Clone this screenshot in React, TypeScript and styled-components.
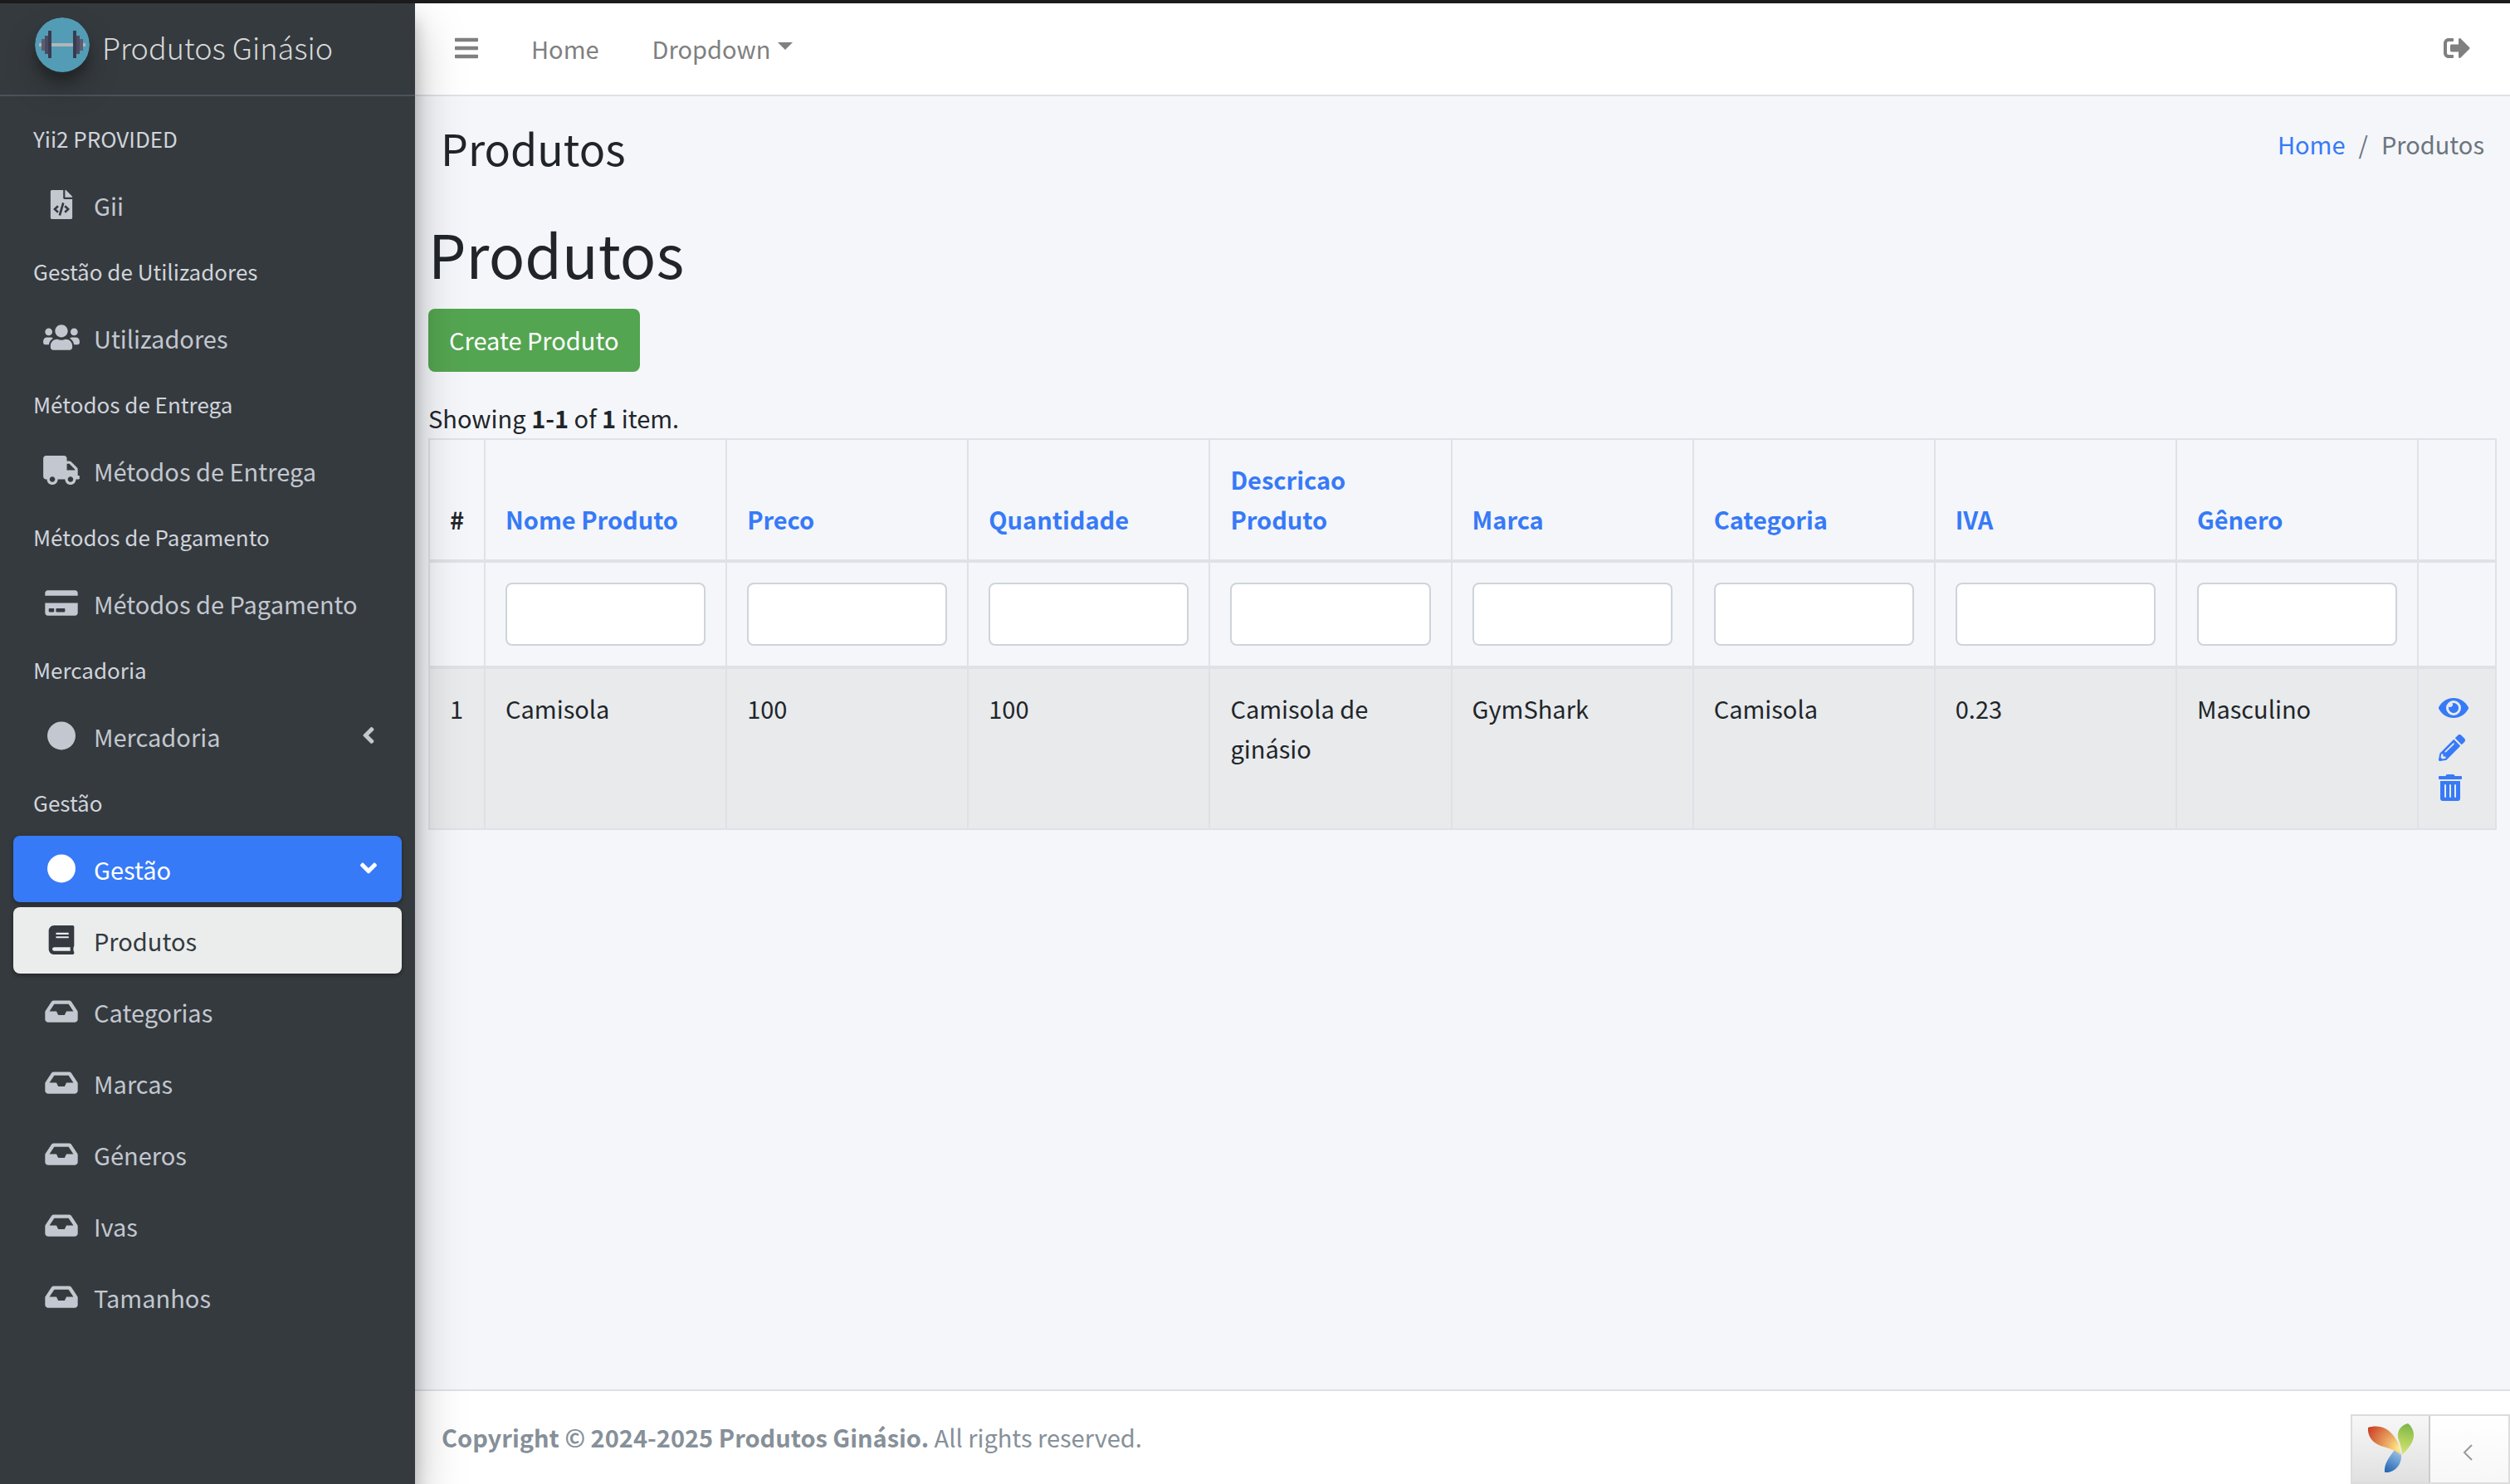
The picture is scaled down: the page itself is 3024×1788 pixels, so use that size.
import React from 'react';
import styled, { createGlobalStyle, css } from 'styled-components';
import {
  FaAngleLeft,
  FaAngleDown,
  FaBars,
  FaBook,
  FaCircle,
  FaCreditCard,
  FaFileCode,
  FaInbox,
  FaSignOutAlt,
  FaTruck,
  FaUsers,
} from 'react-icons/fa';
import type { IconType } from 'react-icons';

const GlobalStyle = createGlobalStyle`
  *, *::before, *::after { box-sizing: border-box; }
  body {
    margin: 0;
    background: #f4f6fa;
    color: #212529;
    font-family: "Noto Sans CJK SC", "Noto Sans", sans-serif;
    font-size: 29px;
    line-height: 48px;
  }
  a { color: #377af7; text-decoration: none; }
  button, input { font: inherit; }
`;

const Page = styled.div`
  display: flex;
  min-height: 100vh;
  border-top: 4px solid #1c1c1c;
`;

const Sidebar = styled.aside`
  position: relative;
  z-index: 2;
  flex: 0 0 500px;
  background: #353a3e;
  box-shadow: 0 28px 56px rgba(0, 0, 0, 0.25), 0 20px 20px rgba(0, 0, 0, 0.22);
`;

const Brand = styled.a`
  display: flex;
  align-items: center;
  gap: 15px;
  height: 112px;
  padding: 0 16px 10px 42px;
  border-bottom: 2px solid #4b525b;
  color: #d6d8d9;
  font-size: 36px;
  font-weight: 300;
  white-space: nowrap;
`;

const BrandName = styled.span`
  padding-top: 4px;
`;

const BrandLogo = styled.svg`
  flex: none;
  width: 66px;
  height: 66px;
  border-radius: 50%;
  box-shadow: 0 20px 40px rgba(0, 0, 0, 0.19), 0 12px 12px rgba(0, 0, 0, 0.23);
`;

const Menu = styled.ul`
  display: flex;
  flex-direction: column;
  margin: 0;
  padding: 17px 16px 0;
  list-style: none;
`;

const MenuHeader = styled.li`
  height: 74px;
  padding: 14px 24px 0;
  color: #d0d4db;
  font-size: 26px;
  line-height: 40px;
`;

const MenuItem = styled.li`
  padding-bottom: 6px;
`;

type Tone = 'plain' | 'primary' | 'light';

const tones = {
  plain: css`
    color: #c2c7d0;
  `,
  primary: css`
    background: #377af7;
    color: #fff;
    box-shadow: 0 2px 6px rgba(0, 0, 0, 0.12), 0 2px 4px rgba(0, 0, 0, 0.24);
  `,
  light: css`
    background: #ebedec;
    color: #343a40;
    box-shadow: 0 2px 6px rgba(0, 0, 0, 0.12), 0 2px 4px rgba(0, 0, 0, 0.24);
  `,
};

const MenuLink = styled.a<{ $tone: Tone }>`
  display: flex;
  align-items: center;
  height: 80px;
  padding: 0 30px 0 32px;
  border-radius: 8px;
  ${(p) => tones[p.$tone]}
`;

const MenuIcon = styled.span`
  display: flex;
  justify-content: center;
  width: 52px;
  margin-right: 13px;
  padding-bottom: 2px;

  svg {
    flex: none;
    width: 44px;
    height: 35px;
  }
`;

const MenuText = styled.span`
  flex: 1;
  white-space: nowrap;
`;

const MenuArrow = styled.span`
  display: flex;
  padding-bottom: 3px;

  svg {
    width: 20px;
    height: 32px;
  }
`;

const Main = styled.div`
  display: flex;
  flex: 1;
  flex-direction: column;
  min-width: 0;
`;

const TopBar = styled.header`
  display: flex;
  align-items: center;
  justify-content: space-between;
  height: 112px;
  padding: 0 48px 3px;
  border-bottom: 2px solid #dee2e6;
  background: #fff;
  color: #808080;
`;

const TopNav = styled.nav`
  display: flex;
  align-items: center;
  gap: 64px;
`;

const IconButton = styled.button<{ $width: number }>`
  display: flex;
  padding: 0;
  border: 0;
  background: none;
  color: inherit;

  svg {
    width: ${(p) => p.$width}px;
    height: 32px;
  }
`;

const TopLink = styled.a`
  color: inherit;
`;

const DropdownButton = styled.button`
  display: flex;
  align-items: center;
  gap: 9px;
  padding: 0;
  border: 0;
  background: none;
  color: inherit;

  &::after {
    content: '';
    margin-bottom: 4px;
    border-top: 9px solid;
    border-right: 9px solid transparent;
    border-left: 9px solid transparent;
  }
`;

const ContentHeader = styled.div`
  display: flex;
  align-items: flex-start;
  justify-content: space-between;
  padding: 27px 31px 0;
`;

const PageTitle = styled.h1`
  margin: 0;
  font-size: 52px;
  font-weight: 400;
  line-height: 70px;
`;

const Breadcrumb = styled.ol`
  display: flex;
  gap: 16px;
  margin: 0;
  padding: 6px 0 0;
  color: #6c757d;
  list-style: none;
`;

const Content = styled.main`
  flex: 1;
  padding: 44px 16px 0;
`;

const Heading = styled.h2`
  margin: 0 0 19px;
  font-size: 72px;
  font-weight: 400;
  line-height: 96px;
`;

const CreateLink = styled.a`
  display: inline-block;
  padding: 12px 25px 14px;
  border-radius: 8px;
  background: #54a551;
  color: #fff;
  line-height: 50px;
`;

const Summary = styled.p`
  margin: 31px 0 1px;
  line-height: 48px;
`;

const Grid = styled.table`
  width: 100%;
  border-collapse: collapse;
  table-layout: fixed;

  th, td {
    padding: 24px;
    border: 2px solid #dee2e6;
    text-align: left;
    vertical-align: top;
  }
  thead th, thead td { border-bottom-width: 4px; }
  th { vertical-align: bottom; font-weight: 700; }
  th, tbody td { padding: 23px 24px 25px; }
  tbody tr { background: #e8eaec; }
`;

const NumberCol = styled.col`
  width: 67px;
`;

const ActionCol = styled.col`
  width: 94px;
`;

const FilterInput = styled.input`
  display: block;
  width: 100%;
  height: 76px;
  padding: 12px 24px;
  border: 2px solid #ced4da;
  border-radius: 8px;
  background: #fff;
`;

const ActionLink = styled.a`
  display: flex;
  align-items: center;
  width: 36px;
  height: 48px;
`;

const ActionIcon = styled.svg`
  height: 32px;
  fill: currentColor;
`;

const Footer = styled.footer`
  height: 114px;
  padding: 31px 32px;
  border-top: 2px solid #dee2e6;
  background: #fff;
  color: #869099;
`;

const DebugBar = styled.div`
  position: fixed;
  right: 0;
  bottom: 0;
  z-index: 3;
  display: flex;
  width: 192px;
  height: 84px;
  border: 2px solid #dcdcdc;
  background: linear-gradient(#fff, #f7f7f7);
`;

const DebugLogo = styled.a`
  display: flex;
  align-items: center;
  justify-content: center;
  width: 94px;
  border-right: 2px solid #ccc;
  background: linear-gradient(#f7f7f7, #e0e0e0);
`;

const DebugToggle = styled.button`
  display: flex;
  flex: 1;
  align-items: center;
  justify-content: center;
  padding: 8px 4px 0 0;
  border: 0;
  background: none;
`;

const EYE =
  'M573 241C518 136 411 64 288 64S58 136 3 241a32 32 0 000 30c55 105 162 177 285 177s230-72 285-177a32 32 0 000-30zM288 400a144 144 0 11144-144 144 144 0 01-144 144zm0-240a95 95 0 00-25 4 48 48 0 01-67 67 96 96 0 1092-71z';
const PENCIL =
  'M498 142l-46 46c-5 5-13 5-17 0L324 77c-5-5-5-12 0-17l46-46c19-19 49-19 68 0l60 60c19 19 19 49 0 68zm-214-42L22 362 0 484c-3 16 12 30 28 28l122-22 262-262c5-5 5-13 0-17L301 100c-4-5-12-5-17 0zM124 340c-5-6-5-14 0-20l154-154c6-5 14-5 20 0s5 14 0 20L144 340c-6 5-14 5-20 0zm-36 84h48v36l-64 12-32-31 12-65h36v48z';
const TRASH =
  'M32 464a48 48 0 0048 48h288a48 48 0 0048-48V128H32zm272-256a16 16 0 0132 0v224a16 16 0 01-32 0zm-96 0a16 16 0 0132 0v224a16 16 0 01-32 0zm-96 0a16 16 0 0132 0v224a16 16 0 01-32 0zM432 32H312l-9-19a24 24 0 00-22-13H167a24 24 0 00-22 13l-9 19H16A16 16 0 000 48v32a16 16 0 0016 16h416a16 16 0 0016-16V48a16 16 0 00-16-16z';

type Entry =
  | { header: string }
  | { label: string; icon: IconType; tone?: Tone; arrow?: IconType };

const menu: Entry[] = [
  { header: 'Yii2 PROVIDED' },
  { label: 'Gii', icon: FaFileCode },
  { header: 'Gestão de Utilizadores' },
  { label: 'Utilizadores', icon: FaUsers },
  { header: 'Métodos de Entrega' },
  { label: 'Métodos de Entrega', icon: FaTruck },
  { header: 'Métodos de Pagamento' },
  { label: 'Métodos de Pagamento', icon: FaCreditCard },
  { header: 'Mercadoria' },
  { label: 'Mercadoria', icon: FaCircle, arrow: FaAngleLeft },
  { header: 'Gestão' },
  { label: 'Gestão', icon: FaCircle, tone: 'primary', arrow: FaAngleDown },
  { label: 'Produtos', icon: FaBook, tone: 'light' },
  { label: 'Categorias', icon: FaInbox },
  { label: 'Marcas', icon: FaInbox },
  { label: 'Géneros', icon: FaInbox },
  { label: 'Ivas', icon: FaInbox },
  { label: 'Tamanhos', icon: FaInbox },
];

const columns = ['Nome Produto', 'Preco', 'Quantidade', 'Descricao Produto', 'Marca', 'Categoria', 'IVA', 'Gênero'];
const row = ['Camisola', '100', '100', 'Camisola de ginásio', 'GymShark', 'Camisola', '0.23', 'Masculino'];

function Dumbbell() {
  return (
    <BrandLogo viewBox="0 0 66 66" aria-hidden="true">
      <circle cx="33" cy="33" r="33" fill="#529cb5" />
      <path d="M5 31h56v4H5z" fill="#b3b5b7" />
      <path d="M8 26h5v14H8zM53 26h5v14h-5z" fill="#5c5d70" />
      <path d="M12 22h5v22h-5zM49 22h5v22h-5z" fill="#4a4b60" />
      <path d="M16 16h4v33h-4zM46 16h4v33h-4z" fill="#3a3b4e" />
    </BrandLogo>
  );
}

function YiiLogo() {
  return (
    <svg width="58" height="62" viewBox="0 0 58 62" aria-hidden="true">
      <defs>
        <radialGradient id="leafOrange" cx="40" cy="30" r="44" gradientUnits="userSpaceOnUse">
          <stop offset="0" stopColor="#fff08a" />
          <stop offset="0.35" stopColor="#ecae66" />
          <stop offset="1" stopColor="#cb4028" />
        </radialGradient>
        <linearGradient id="leafGreen" x1="42" y1="36" x2="50" y2="2" gradientUnits="userSpaceOnUse">
          <stop offset="0" stopColor="#d6e27c" />
          <stop offset="0.5" stopColor="#aed059" />
          <stop offset="1" stopColor="#7fb74c" />
        </linearGradient>
        <linearGradient id="leafBlue" x1="38" y1="34" x2="24" y2="56" gradientUnits="userSpaceOnUse">
          <stop offset="0" stopColor="#98bfe8" />
          <stop offset="1" stopColor="#2a6bb3" />
        </linearGradient>
      </defs>
      <path d="M34 32Q43 34 42 40C42 50 34 60 22 59C21 48 28 40 34 32Z" fill="url(#leafBlue)" />
      <path d="M2 5C14 1 25 5 32 14C38 21 41 29 41 38C36 32 27 30 17 27C7 23 1 15 2 5Z" fill="url(#leafOrange)" />
      <path d="M50 0C42 2 37 8 38 17C40 24 43 30 43 38C50 31 57 23 57 14C57 8 54 3 50 0Z" fill="url(#leafGreen)" />
    </svg>
  );
}

export default function App() {
  return (
    <>
      <GlobalStyle />
      <Page>
        <Sidebar>
          <Brand href="#">
            <Dumbbell />
            <BrandName>Produtos Ginásio</BrandName>
          </Brand>
          <nav>
            <Menu>
              {menu.map((entry) => {
                if ('header' in entry) return <MenuHeader key={`h-${entry.header}`}>{entry.header}</MenuHeader>;
                const Icon = entry.icon;
                const Arrow = entry.arrow;
                return (
                  <MenuItem key={entry.label}>
                    <MenuLink href="#" $tone={entry.tone ?? 'plain'}>
                      <MenuIcon>
                        <Icon />
                      </MenuIcon>
                      <MenuText>{entry.label}</MenuText>
                      {Arrow && (
                        <MenuArrow>
                          <Arrow />
                        </MenuArrow>
                      )}
                    </MenuLink>
                  </MenuItem>
                );
              })}
            </Menu>
          </nav>
        </Sidebar>
        <Main>
          <TopBar>
            <TopNav>
              <IconButton $width={28} aria-label="Menu">
                <FaBars />
              </IconButton>
              <TopLink href="#">Home</TopLink>
              <DropdownButton>Dropdown</DropdownButton>
            </TopNav>
            <IconButton $width={32} aria-label="Logout">
              <FaSignOutAlt />
            </IconButton>
          </TopBar>
          <ContentHeader>
            <PageTitle>Produtos</PageTitle>
            <Breadcrumb>
              <li>
                <a href="#">Home</a>
              </li>
              <li>/</li>
              <li>Produtos</li>
            </Breadcrumb>
          </ContentHeader>
          <Content>
            <Heading>Produtos</Heading>
            <CreateLink href="#">Create Produto</CreateLink>
            <Summary>
              Showing <b>1-1</b> of <b>1</b> item.
            </Summary>
            <Grid>
              <colgroup>
                <NumberCol />
                {columns.map((name) => (
                  <col key={name} />
                ))}
                <ActionCol />
              </colgroup>
              <thead>
                <tr>
                  <th>#</th>
                  {columns.map((name) => (
                    <th key={name}>
                      <a href="#">{name}</a>
                    </th>
                  ))}
                  <th />
                </tr>
                <tr>
                  <td />
                  {columns.map((name) => (
                    <td key={name}>
                      <FilterInput type="text" aria-label={name} />
                    </td>
                  ))}
                  <td />
                </tr>
              </thead>
              <tbody>
                <tr>
                  <td>1</td>
                  {row.map((value, i) => (
                    <td key={columns[i]}>{value}</td>
                  ))}
                  <td>
                    <ActionLink href="#" aria-label="View">
                      <ActionIcon viewBox="0 0 576 512">
                        <path d={EYE} />
                      </ActionIcon>
                    </ActionLink>
                    <ActionLink href="#" aria-label="Update">
                      <ActionIcon viewBox="0 0 512 512">
                        <path d={PENCIL} />
                      </ActionIcon>
                    </ActionLink>
                    <ActionLink href="#" aria-label="Delete">
                      <ActionIcon viewBox="0 0 448 512">
                        <path d={TRASH} />
                      </ActionIcon>
                    </ActionLink>
                  </td>
                </tr>
              </tbody>
            </Grid>
          </Content>
          <Footer>
            <strong>Copyright © 2024-2025 Produtos Ginásio.</strong> All rights reserved.
          </Footer>
        </Main>
      </Page>
      <DebugBar>
        <DebugLogo href="#" aria-label="Yii Debugger">
          <YiiLogo />
        </DebugLogo>
        <DebugToggle aria-label="Toggle debug toolbar">
          <svg width="12" height="20" viewBox="0 0 12 20" aria-hidden="true">
            <path d="M11 1L2 10l9 9" fill="none" stroke="#999" strokeWidth="2" />
          </svg>
        </DebugToggle>
      </DebugBar>
    </>
  );
}
